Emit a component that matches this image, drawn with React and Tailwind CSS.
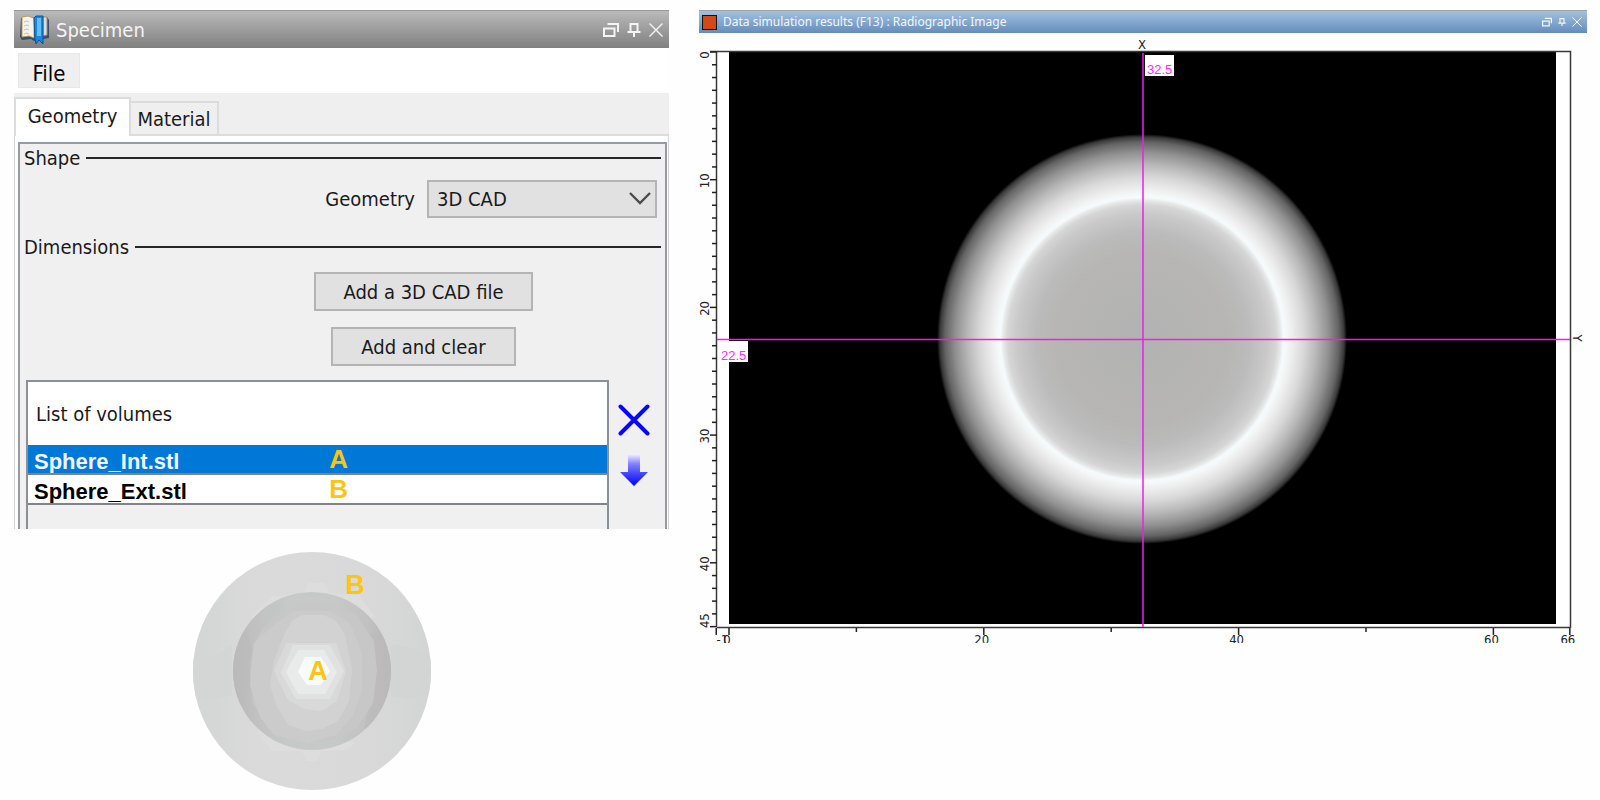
import { useState } from 'react';

const volumes = [
  { name: 'Sphere_Int.stl', tag: 'A' },
  { name: 'Sphere_Ext.stl', tag: 'B' },
];

function RestoreIcon({ className }) {
  return (
    <svg viewBox="0 0 16 14" className={className} fill="none" stroke="#f4f4f4" strokeWidth="2">
      <path d="M1 5.5h10.5V13H1z" />
      <path d="M4.5 1H15v8" />
    </svg>
  );
}

function PinIcon({ className }) {
  return (
    <svg viewBox="0 0 14 14" className={className} fill="none" stroke="#f4f4f4" strokeWidth="2">
      <path d="M3.5 9V1h7v8M0.5 9h13M7 9v5" />
    </svg>
  );
}

function CloseIcon({ className }) {
  return (
    <svg viewBox="0 0 14 14" className={className} fill="none" stroke="#f4f4f4" strokeWidth="1.4">
      <path d="M0.5 0.5l13 13M13.5 0.5l-13 13" />
    </svg>
  );
}

function BookIcon() {
  return (
    <svg viewBox="0 0 30 30" className="w-[30px] h-[30px]">
      <path d="M1 3l12-1 3 2 11-2 2 3v18l-11 2-4 1-3-2-9 1-2-3z" fill="#35506b" />
      <path d="M2 2l6-1 6 2v20l-5-2-7 1z" fill="#f6f3ea" stroke="#b99a5c" strokeWidth="1" />
      <path d="M4 7l3-1 2 1M4 11l3-1 2 1M4 15l3-1 2 1M4 19l3-1 2 1" fill="none" stroke="#c4c2ba" />
      <path d="M23 2h4v18l-4 1z" fill="#cfe0ea" stroke="#a98c55" strokeWidth="1" />
      <path d="M14 3l2-2h7v28l-4-4-3 4-1-5z" fill="#1c86dc" stroke="#0d559c" strokeWidth="1" />
      <path d="M17 3h4v18h-4z" fill="#63bdf7" />
    </svg>
  );
}

function GroupTitle({ children }) {
  return (
    <div className="flex items-center gap-1.5 h-7 pl-1 pr-1">
      <h2>{children}</h2>
      <div className="flex-1 h-0.5 bg-[#262626]" />
    </div>
  );
}

function SpecimenPanel() {
  const [selected, setSelected] = useState(0);

  return (
    <section className="h-[519px] overflow-hidden bg-white text-[20px] leading-6 text-[#1a1a1a]">
      <header className="flex items-center h-[38px] px-1.5 gap-1 bg-linear-to-b from-[#bababa] to-[#808080] border-t border-[#999]">
        <BookIcon />
        <h1 className="flex-1 pl-0.5 text-[#f4f4f4]">Specimen</h1>
        <button aria-label="Restore"><RestoreIcon className="w-4 h-3.5" /></button>
        <button aria-label="Pin" className="ml-1"><PinIcon className="w-3.5 h-3.5" /></button>
        <button aria-label="Close" className="ml-1"><CloseIcon className="w-3.5 h-3.5" /></button>
      </header>

      <div className="flex items-center h-[45px] px-1">
        <button className="w-[62px] h-[35px] pt-1.5 bg-[#efefef] border border-[#e8e8e8] text-[22px] text-black">File</button>
      </div>

      <div role="tablist" className="flex items-end h-[43px] bg-[#efefef]">
        <button role="tab" aria-selected="true" className="w-[117px] h-[39px] pb-1 bg-white border-2 border-b-0 border-[#dcdcdc]">
          Geometry
        </button>
        <button role="tab" aria-selected="false" className="w-[88px] h-[35px] border-2 border-l-0 border-[#dcdcdc]">
          Material
        </button>
        <div className="flex-1 h-0.5 bg-[#dcdcdc]" />
      </div>

      <div className="border-x border-[#d4d4d4] pl-[3px] pr-px pt-1.5">
        <div className="h-[400px] border-2 border-[#959aa3] bg-[#f0f0f0]">
          <GroupTitle>Shape</GroupTitle>
          <div className="flex items-center justify-end gap-3 pt-2 pr-2">
            <label htmlFor="geometry">Geometry</label>
            <div className="relative">
              <select id="geometry" className="appearance-none w-[230px] h-[38px] pl-2 bg-[#e1e1e1] border-2 border-[#b4b4b4]">
                <option>3D CAD</option>
              </select>
              <svg viewBox="0 0 22 13" className="absolute right-1.5 top-3 w-[22px] h-[13px] pointer-events-none" fill="none" stroke="#4c4c4c" strokeWidth="2.4">
                <path d="M1 1l10 10L21 1" />
              </svg>
            </div>
          </div>
          <div className="pt-[15px]">
            <GroupTitle>Dimensions</GroupTitle>
          </div>
          <div className="flex flex-col items-center gap-4 pt-[11px] pl-[162px]">
            <button className="w-[219px] h-[39px] bg-[#e1e1e1] border-2 border-[#b4b4b4]">Add a 3D CAD file</button>
            <button className="w-[185px] h-[39px] bg-[#e1e1e1] border-2 border-[#b4b4b4]">Add and clear</button>
          </div>
          <div className="flex pt-3.5 pl-1.5 pr-1.5">
            <div className="flex-1 h-[160px] border-2 border-[#8b9098]">
              <table className="w-full table-fixed border-collapse">
                <thead>
                  <tr>
                    <th scope="col" className="w-[51%] h-[63px] pl-2 text-left font-normal bg-white">List of volumes</th>
                    <td className="bg-white" />
                  </tr>
                </thead>
                <tbody className="font-['Liberation_Sans',sans-serif] font-bold text-[22px]">
                  {volumes.map((v, i) => (
                    <tr
                      key={v.name}
                      onClick={() => setSelected(i)}
                      className={i === selected ? 'bg-[#0078d7] text-[#eef6ff]' : 'bg-white text-black'}
                    >
                      <td className="p-0 pl-1.5 border-b-2 border-[#808488]">
                        <div className="h-7 leading-[34px] overflow-hidden">{v.name}</div>
                      </td>
                      <td className="p-0 pl-1.5 text-[#fcc510] text-[26px] leading-7 border-b-2 border-[#808488]">{v.tag}</td>
                    </tr>
                  ))}
                </tbody>
              </table>
            </div>
            <div className="flex flex-col items-center gap-[18px] w-[50px] pt-6">
              <button aria-label="Remove volume">
                <svg viewBox="0 0 32 32" className="w-8 h-8" fill="none" stroke="#0808ff" strokeWidth="4" strokeLinecap="round">
                  <path d="M2.5 2.5l27 27M29.5 2.5l-27 27" />
                </svg>
              </button>
              <button aria-label="Move down">
                <svg viewBox="0 0 28 32" className="w-7 h-8">
                  <defs>
                    <linearGradient id="arrow" x1="0" y1="0" x2="0" y2="1">
                      <stop offset="0" stopColor="#f4f4ff" />
                      <stop offset="0.3" stopColor="#8484ff" />
                      <stop offset="0.6" stopColor="#4848ff" />
                      <stop offset="1" stopColor="#0000ff" />
                    </linearGradient>
                  </defs>
                  <path d="M8 0h12v18h8L14 32 0 18h8z" fill="url(#arrow)" />
                </svg>
              </button>
            </div>
          </div>
        </div>
      </div>
    </section>
  );
}

function SphereSketch() {
  return (
    <svg viewBox="0 0 240 240" className="w-60 h-60" role="img" aria-label="Nested spheres">
      <defs>
        <linearGradient id="shell" x1="0" x2="1" y1="0" y2="0">
          <stop offset="0" stopColor="#d3d6d4" />
          <stop offset="0.3" stopColor="#dadada" />
          <stop offset="0.7" stopColor="#d9d9d9" />
          <stop offset="1" stopColor="#d3d5d4" />
        </linearGradient>
        <linearGradient id="core" x1="0" x2="1" y1="0" y2="0">
          <stop offset="0" stopColor="#b9b8b8" />
          <stop offset="0.15" stopColor="#c1c1c1" />
          <stop offset="0.35" stopColor="#c6c9c7" />
          <stop offset="0.65" stopColor="#c6c9c7" />
          <stop offset="0.85" stopColor="#c1c1c1" />
          <stop offset="1" stopColor="#b7b5b5" />
        </linearGradient>
        <clipPath id="outer">
          <circle cx="120" cy="120" r="119" />
        </clipPath>
        <clipPath id="inner">
          <circle cx="120" cy="120" r="79" />
        </clipPath>
      </defs>
      <g clipPath="url(#outer)">
        <path d="M0 0h240v240H0z" fill="url(#shell)" />
        <path d="M112 42l4-10h16l5 10 30 2 16 22-9 6H66l-7-6 20-20z" fill="#dddddd" />
        <path d="M64 180l16 20h30l5 10h9l6-10 24-1 10-8z" fill="#dddddd" />
        <path d="M1 108l24-4 15-10v50l-20 6-19-2z" fill="#d4d6d5" />
        <path d="M199 94l20 2 20 12v32l-18 8-22-2z" fill="#d3d5d4" />
      </g>
      <g clipPath="url(#inner)">
        <path d="M40 40h160v160H40z" fill="url(#core)" />
        <path d="M40 84l15-6 6 24-4 8 2 22-8 22H40z" fill="#bcbbbb" opacity="0.6" />
        <path d="M200 84l-22-2-6 18 6 14-4 22 4 16-6 26 28-12z" fill="#bcbbbb" opacity="0.6" />
        <path d="M70 78l20-17 24-8h24l26 11 18 26 3 30-4 32-17 26-28 12h-34l-24-10-17-28-3-30 3-26z" fill="#c6c7c6" />
        <path d="M84 72l18-12h36l20 12 12 30v38l-10 26-16 18-28 8-34-8-14-18-10-32 4-42z" fill="#cbcbcb" />
        <path d="M92 84l8-14 10-6h22l12 6 9 14 7 34-3 32-11 20-16 8-16 2-18-6-12-20-6-20 4-24z" fill="#d2d2d2" />
        <path d="M94 92h50l10 28-9 30-15 10-18-2-17-10-13-28z" fill="#d9d9d9" />
        <path d="M101 94h37l14 26-14 28h-34l-15-26z" fill="#e0e1e1" />
        <path d="M106 99h26l13 22-12 22h-27l-12-22z" fill="#e9ebeb" />
        <path d="M113 106h16l9 14-9 14h-14l-9-13z" fill="#f8fbfb" />
      </g>
      <g fill="#fcc510" fontSize="27" fontWeight="bold" fontFamily="Liberation Sans, sans-serif" textAnchor="middle">
        <text x="163" y="43">B</text>
        <text x="126" y="129">A</text>
      </g>
    </svg>
  );
}

// origin of the data and pixels per unit
const X0 = 30;
const Y0 = 18;
const UNIT_X = 12.74;
const UNIT_Y = 12.77;

const ticksY = Array.from({ length: 46 }, (_, i) => i);
const labelsY = [0, 10, 20, 30, 40, 45];
const labelsX = [-1, 0, 20, 40, 60, 66];

function labelShift(v) {
  if (v === 45) return -6;
  return v === 0 ? 3 : 1;
}

function RadiographChart() {
  return (
    <svg viewBox="0 0 888 620" className="block w-full mt-px overflow-visible" role="img" aria-label="Radiographic image">
      <defs>
        <radialGradient id="radiograph" gradientUnits="userSpaceOnUse" cx="443" cy="305" r="205">
          <stop offset="0" stopColor="#b2b2b2" />
          <stop offset="0.42" stopColor="#b7b6b5" />
          <stop offset="0.52" stopColor="#bbbbbb" />
          <stop offset="0.61" stopColor="#c8c9c8" />
          <stop offset="0.655" stopColor="#d6d6d6" />
          <stop offset="0.675" stopColor="#e6e8e8" />
          <stop offset="0.69" stopColor="#f6fafa" />
          <stop offset="0.705" stopColor="#f5f8f8" />
          <stop offset="0.74" stopColor="#ebebeb" />
          <stop offset="0.79" stopColor="#d8d8d8" />
          <stop offset="0.85" stopColor="#b8b8b8" />
          <stop offset="0.91" stopColor="#919191" />
          <stop offset="0.96" stopColor="#646464" />
          <stop offset="0.985" stopColor="#3a3a3a" />
          <stop offset="1" stopColor="#000000" />
        </radialGradient>
        <clipPath id="labels">
          <rect x="0" y="590" width="888" height="19" />
        </clipPath>
      </defs>

      <rect x="17" y="18" width="854" height="576" fill="#fff" />
      <rect x="30" y="18" width="827" height="572" fill="#000" />
      <circle cx="443" cy="305" r="205" fill="url(#radiograph)" />

      <path d="M11 17.5H871.5V594M17.5 18V592M18 593.5H871" fill="none" stroke="#3a3a3a" strokeWidth="1.5" />
      <g stroke="#222" strokeWidth="1.5">
        {ticksY.map((v) => (
          <path key={v} d={`M${labelsY.includes(v) ? 11 : 13} ${Y0 + v * UNIT_Y}H18`} />
        ))}
        {labelsX.map((v) => (
          <path key={v} d={`M${X0 + v * UNIT_X} 594v7`} />
        ))}
        {[10, 30, 50].map((v) => (
          <path key={v} d={`M${X0 + v * UNIT_X} 594v4`} />
        ))}
      </g>

      <g fill="#222" fontSize="13" textAnchor="middle">
        {labelsY.map((v) => (
          <text key={v} transform={`translate(10 ${Y0 + v * UNIT_Y + labelShift(v)}) rotate(-90)`}>{v}</text>
        ))}
        <g clipPath="url(#labels)">
          {labelsX.map((v) => (
            <text key={v} x={X0 + v * UNIT_X - (v === -1 ? -6 : 2)} y="610">{v}</text>
          ))}
        </g>
        <text x="443" y="15">X</text>
        <text transform="translate(874 304) rotate(90)">Y</text>
      </g>

      <path d="M444 19V593M18 305.5H871" stroke="#f01cf0" strokeWidth="1.5" />
      <rect x="446" y="21" width="29" height="21" fill="#fff" />
      <rect x="19" y="307" width="30" height="21" fill="#fff" />
      <g fill="#ff2cff" fontSize="13" fontFamily="Liberation Sans, sans-serif">
        <text x="448" y="40">32.5</text>
        <text x="22" y="326">22.5</text>
      </g>
    </svg>
  );
}

function ResultsPanel() {
  return (
    <section>
      <header className="flex items-center h-[23px] px-[3px] gap-1.5 bg-linear-to-b from-[#a2c1e4] to-[#658db9] border-t border-[#a0a0a0] text-[12px] leading-4 text-[#f2f6fb] font-['Noto_Sans',sans-serif]">
        <span className="w-[15px] h-[15px] bg-[#d24a17] border border-[#111]" />
        <h2 className="flex-1">Data simulation results (F13) : Radiographic Image</h2>
        <button aria-label="Restore"><RestoreIcon className="w-2.5 h-2.5" /></button>
        <button aria-label="Pin"><PinIcon className="w-2 h-2.5" /></button>
        <button aria-label="Close" className="pr-0.5"><CloseIcon className="w-2.5 h-2.5" /></button>
      </header>
      <RadiographChart />
    </section>
  );
}

export default function App() {
  return (
    <main className="grid grid-cols-[655fr_888fr] gap-[30px] min-h-screen pt-2.5 pl-3.5 pr-[13px] bg-[#fefefe] font-['DejaVu_Sans_Condensed','DejaVu_Sans',sans-serif]">
      <div>
        <SpecimenPanel />
        <div className="flex pl-[178px] pt-[22px]">
          <SphereSketch />
        </div>
      </div>
      <ResultsPanel />
    </main>
  );
}
